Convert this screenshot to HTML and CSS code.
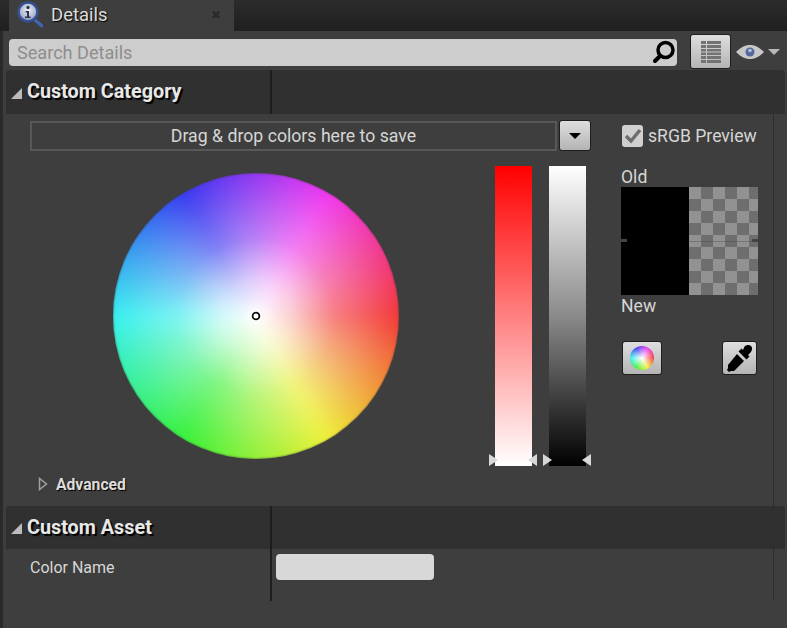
FILE: index.html
```html
<!DOCTYPE html>
<html lang="en">
<head>
    <meta charset="UTF-8">
    <meta name="viewport" content="width=device-width, initial-scale=1.0">
    <title>Details</title>
    <link rel="stylesheet" href="styles.css">
</head>
<body>
    <div class="tabbar">
        <div class="tab">
            <svg class="tab-icon" width="26" height="28" viewBox="0 0 26 28">
                <defs>
                    <radialGradient id="glass" cx="0.5" cy="0.4" r="0.6">
                        <stop offset="0" stop-color="#f2f2f6"/>
                        <stop offset="0.7" stop-color="#aab4d0"/>
                        <stop offset="1" stop-color="#5f78b4"/>
                    </radialGradient>
                </defs>
                <path d="M18 19l7 6" stroke="#3f66b5" stroke-width="3" stroke-linecap="round"/>
                <circle cx="11" cy="11" r="9.500" fill="url(#glass)" stroke="#35508f" stroke-width="2.500"/>
                <circle cx="11" cy="6.500" r="1.700" fill="#2d3750"/>
                <path d="M8.500 10h3.500v5.500h1.500V17h-5.500v-1.500H10V11.500H8.500z" fill="#2d3750"/>
            </svg>
            <span class="tab-title">Details</span>
            <span class="tab-close">&#10006;</span>
        </div>
    </div>

    <div class="panel">
        <div class="toolbar">
            <div class="search">
                <span>Search Details</span>
                <svg width="26" height="26" viewBox="0 0 26 26">
                    <circle cx="14.500" cy="11" r="7.500" fill="none" stroke="#000" stroke-width="3.500"/>
                    <path d="M9 17l-5 5" stroke="#000" stroke-width="4" stroke-linecap="round"/>
                </svg>
            </div>
            <button class="btn btn-grid">
                <svg width="20" height="22" viewBox="0 0 20 22">
                    <path d="M0 0h5v3H0zM6 0h14v3H6zM0 4h5v3H0zM6 4h14v3H6zM0 8h5v2.500H0zM6 8h14v2.500H6zM0 11.500h5V14H0zM6 11.500h14V14H6zM0 15h5v3H0zM6 15h14v3H6zM0 19h5v3H0zM6 19h14v3H6z" fill="#737373"/>
                </svg>
            </button>
            <svg class="eye" width="28" height="14" viewBox="0 0 28 14">
                <path d="M0 7C6 1 10 0 14 0s8 1 14 7c-6 6-10 7-14 7S6 13 0 7z" fill="#c8c8c8"/>
                <circle cx="14" cy="7" r="4.500" fill="#55689f"/>
                <circle cx="14" cy="5.500" r="1.800" fill="#b9c0d4"/>
            </svg>
            <span class="caret"></span>
        </div>

        <div class="cat-header">
            <div class="cat-name"><span class="cat-arrow"></span>Custom Category</div>
        </div>

        <div class="picker">
            <div class="save-row">
                <div class="save-box">Drag &amp; drop colors here to save</div>
                <button class="btn btn-drop"><span class="drop-caret"></span></button>
                <span class="check">
                    <svg width="18" height="16" viewBox="0 0 18 16">
                        <path d="M2 8l5 5L16 2" fill="none" stroke="#6e6e6e" stroke-width="3.500"/>
                    </svg>
                </span>
                <span class="check-label">sRGB Preview</span>
            </div>

            <div class="picker-main">
                <div class="wheel">
                    <svg class="wheel-dot" width="10" height="10" viewBox="0 0 10 10">
                        <circle cx="5" cy="5" r="3.400" fill="#fff" stroke="#111" stroke-width="1.800"/>
                    </svg>
                </div>
                <div class="slider slider-sat">
                    <span class="mark mark-l"></span><span class="mark mark-r"></span>
                </div>
                <div class="slider slider-val">
                    <span class="mark mark-l"></span><span class="mark mark-r"></span>
                </div>
                <div class="side">
                    <div class="side-label">Old</div>
                    <div class="swatch">
                        <div class="swatch-solid"></div>
                        <div class="swatch-alpha"></div>
                        <span class="tick tick-l"></span><span class="tick tick-r"></span>
                    </div>
                    <div class="side-label">New</div>
                    <div class="side-btns">
                        <button class="btn btn-wheel"><span class="mini-wheel"></span></button>
                        <button class="btn btn-dropper">
                            <svg width="28" height="28" viewBox="0 0 28 28">
                                <path d="M18.500 2.500c2-2 5-2 6.500-.5s1.500 4.500-.5 6.500l-2.500 2.500 1.500 1.500-3 3-8-8 3-3 1.500 1.500z" fill="#000"/>
                                <path d="M11 10l7 7L8 27l-3 0-2 1-2-2 1-2 0-3z" fill="#000"/>
                            </svg>
                        </button>
                    </div>
                </div>
            </div>

            <div class="advanced">
                <svg class="adv-arrow" width="10" height="14" viewBox="0 0 10 14">
                    <path d="M1.500 1.500v11L8.500 7z" fill="none" stroke="#a0a0a0" stroke-width="1.500"/>
                </svg>
                Advanced
            </div>
        </div>

        <div class="cat-header cat-asset">
            <div class="cat-name"><span class="cat-arrow"></span>Custom Asset</div>
        </div>
        <div class="prop-row">
            <div class="prop-name">Color Name</div>
            <div class="prop-value"><div class="text-input"></div></div>
        </div>
    </div>
</body>
</html>
```

FILE: styles.css
```css
html, body {
    margin: 0;
    height: 100%;
    overflow: hidden;
}
body {
    font-family: Roboto, "Liberation Sans", sans-serif;
    background-color: #3e3e3e;
    color: #d6d6d6;
}
button {
    padding: 0;
    font: inherit;
}

/* tab strip */
.tabbar {
    height: 31px;
    padding-left: 9px;
    background: linear-gradient(#2b2b2b, #202020);
}
.tab {
    width: 225px;
    height: 31px;
    box-sizing: border-box;
    display: flex;
    align-items: center;
    padding: 0 0 2px 8px;
    background-color: #3e3e3e;
}
.tab-icon {
    flex: none;
}
.tab-title {
    margin-left: 8px;
    font-size: 18.500px;
    color: #dcdcdc;
    text-shadow: 1px 1px 1px #000;
}
.tab-close {
    margin-left: auto;
    margin-right: 13px;
    font-size: 12px;
    color: #2a2a2a;
}

/* main panel */
.panel {
    position: relative;
    height: 597px;
    box-sizing: border-box;
    border-left: 3px solid #2a2a2a;
    padding-left: 3px;
    padding-right: 2px;
}
.panel::after {
    content: "";
    position: absolute;
    left: 770px;
    top: 39px;
    width: 1px;
    height: 530px;
    background-color: #2e2e2e;
}
.toolbar {
    height: 39px;
    box-sizing: border-box;
    display: flex;
    align-items: flex-start;
    padding-left: 3px;
}
.search {
    width: 668px;
    height: 27px;
    margin-top: 8px;
    box-sizing: border-box;
    display: flex;
    align-items: center;
    justify-content: space-between;
    padding: 0 0 1px 8px;
    background-color: #cdcdcd;
    border-radius: 4px;
    font-size: 18.100px;
    color: #8e8e8e;
}
.btn {
    display: flex;
    align-items: center;
    justify-content: center;
    box-sizing: border-box;
    border: 1px solid #1e1e1e;
    border-radius: 3px;
    background: linear-gradient(#dedede, #b4b4b4);
}
.btn-grid {
    width: 41px;
    height: 35px;
    margin: 3px 0 0 13px;
}
.eye {
    margin: 14px 0 0 5px;
}
.caret {
    width: 0;
    height: 0;
    margin: 18px 0 0 4px;
    border-left: 6px solid transparent;
    border-right: 6px solid transparent;
    border-top: 6px solid #b8b8b8;
}

/* category headers */
.cat-header {
    height: 44px;
    background-color: #303030;
    border-radius: 4px 4px 0 0;
    display: flex;
}
.cat-asset {
    height: 43px;
}
.cat-name {
    width: 266px;
    height: 100%;
    box-sizing: border-box;
    display: flex;
    align-items: center;
    padding: 0 0 1px 5px;
    border-right: 2px solid #1d1d1d;
    font-size: 19.800px;
    font-weight: 700;
    color: #e8e8e8;
    text-shadow: 2px 2px 1px #000;
}
.cat-arrow {
    width: 0;
    height: 0;
    margin-right: 5px;
    margin-top: 3px;
    border-left: 11px solid transparent;
    border-bottom: 11px solid #bcbcbc;
}

/* colour picker */
.picker {
    height: 392px;
    box-sizing: border-box;
    padding: 7px 0 0 24px;
}
.save-row {
    display: flex;
    align-items: flex-start;
}
.save-box {
    width: 527px;
    height: 30px;
    box-sizing: border-box;
    border: 2px solid #585858;
    text-align: center;
    font-size: 17.700px;
    line-height: 26px;
    color: #d6d6d6;
}
.btn-drop {
    width: 32px;
    height: 31px;
    margin: -1px 0 0 2px;
}
.drop-caret {
    width: 0;
    height: 0;
    border-left: 6px solid transparent;
    border-right: 6px solid transparent;
    border-top: 6px solid #000;
}
.check {
    width: 21px;
    height: 22px;
    margin: 4px 0 0 31px;
    display: flex;
    align-items: center;
    justify-content: center;
    background-color: #d0d0d0;
    border-radius: 3px;
}
.check-label {
    margin: 4px 0 0 5px;
    font-size: 17.600px;
    line-height: 22px;
}
.picker-main {
    display: flex;
    align-items: flex-start;
    margin-top: 15px;
}
.wheel {
    position: relative;
    width: 286px;
    height: 286px;
    margin: 7px 0 0 83px;
    border-radius: 50%;
    overflow: hidden;
}
/* hue ring, blurred so the primaries don't show as creases */
.wheel::before {
    content: "";
    position: absolute;
    inset: -24px;
    background: conic-gradient(from 90deg, #f23838, #eef038, #38f038, #38f0f0, #3838f0, #f038f0, #f23838);
    filter: blur(7px);
}
.wheel::after {
    content: "";
    position: absolute;
    inset: 0;
    border-radius: 50%;
    background: radial-gradient(circle closest-side, #fff 0, rgba(255, 255, 255, 0.75) 25%, rgba(255, 255, 255, 0.35) 55%, rgba(255, 255, 255, 0) 100%);
    box-shadow: inset 0 0 2px #3e3e3e;
}
.wheel-dot {
    position: absolute;
    z-index: 1;
    left: 138px;
    top: 138px;
}
.slider {
    position: relative;
    width: 37px;
    height: 300px;
}
.slider-sat {
    margin-left: 96px;
    background: linear-gradient(#ff0000, #ff8080 50%, #ffffff);
}
.slider-val {
    margin-left: 17px;
    background: linear-gradient(#ffffff, #8a8a8a 50%, #000000);
}
.mark {
    position: absolute;
    bottom: 0;
    width: 0;
    height: 0;
    border-top: 6px solid transparent;
    border-bottom: 6px solid transparent;
}
.mark-l {
    left: -6px;
    border-left: 9px solid #d8d8d8;
}
.mark-r {
    right: -5px;
    border-right: 9px solid #d8d8d8;
}
.side {
    width: 137px;
    margin-left: 35px;
}
.side-label {
    height: 21px;
    font-size: 17.600px;
    line-height: 23px;
}
.swatch {
    position: relative;
    height: 108px;
    display: flex;
}
.swatch-solid {
    width: 68px;
    background-color: #000;
}
.swatch-alpha {
    flex: 1;
    background-image:
        linear-gradient(rgba(60, 60, 60, 0.35), rgba(60, 60, 60, 0.35)),
        conic-gradient(#6e6e6e 25%, #929292 25% 50%, #6e6e6e 50% 75%, #929292 75%);
    background-size: 100% 1px, 24px 24px;
    background-position: 0 54px, 0 0;
    background-repeat: no-repeat, repeat;
}
.tick {
    position: absolute;
    top: 52px;
    width: 6px;
    height: 3px;
    background-color: #444;
}
.tick-l {
    left: 0;
}
.tick-r {
    right: 0;
}
.side-btns {
    display: flex;
    justify-content: space-between;
    margin: 25px 1px 0 1px;
}
.btn-wheel {
    width: 40px;
    height: 34px;
}
.btn-dropper {
    width: 35px;
    height: 34px;
}
.mini-wheel {
    width: 24px;
    height: 24px;
    border-radius: 50%;
    background:
        radial-gradient(circle closest-side, #fff 0, rgba(255, 255, 255, 0) 100%),
        conic-gradient(from 90deg, #f43c3c, #eef03c, #3cf03c, #3cf0f0, #3c3cf0, #f03cf0, #f43c3c);
}
.advanced {
    display: flex;
    align-items: center;
    height: 20px;
    margin: 8px 0 0 8px;
    font-size: 15.700px;
    font-weight: 700;
    color: #dcdcdc;
    text-shadow: 1px 1px 1px #000;
}
.adv-arrow {
    margin-right: 8px;
}

/* property rows */
.prop-row {
    display: flex;
    height: 52px;
}
.prop-name {
    width: 266px;
    height: 100%;
    box-sizing: border-box;
    border-right: 2px solid #1d1d1d;
    padding: 9px 0 0 24px;
    font-size: 16px;
    line-height: 19px;
}
.text-input {
    width: 158px;
    height: 26px;
    margin: 5px 0 0 4px;
    background-color: #d8d8d8;
    border-radius: 4px;
}
```
